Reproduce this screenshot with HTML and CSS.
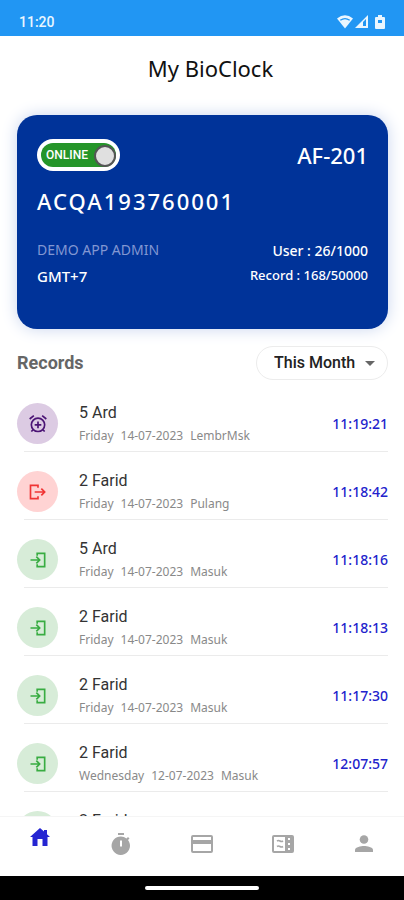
FILE: index.html
```html
<!DOCTYPE html>
<html lang="en">
<head>
<meta charset="utf-8">
<meta name="viewport" content="width=device-width, initial-scale=1">
<title>My BioClock</title>
<link rel="stylesheet" href="styles.css">
</head>
<body>
<svg width="0" height="0" class="sprite" aria-hidden="true">
  <symbol id="login" viewBox="0 0 24 24"><path d="M11 7V4H20V20H11V17M3 12H14M10 8L14 12L10 16" fill="none" stroke="currentColor" stroke-width="2"/></symbol>
  <symbol id="logout" viewBox="0 0 24 24"><path d="M12 7V4H3V20H12V17M8 12H20M16 8L20 12L16 16" fill="none" stroke="currentColor" stroke-width="2"/></symbol>
  <symbol id="alarm" viewBox="0 0 24 24"><g fill="none" stroke="currentColor" stroke-width="2"><circle cx="12" cy="13" r="8"/><path d="M2 6L7 2M22 6L17 2M12 9V17M8 13H16M6 19L4 21M18 19L20 21"/></g></symbol>
</svg>

<header class="status">
  <span>11:20</span>
  <span class="status-icons">
    <svg width="16" height="14" viewBox="0 0 16 14"><path d="M0 3.5Q8-2.800 16 3.500L8 13.500Z" fill="#e9f6ff"/><path d="M3.300 5.300Q8 2 12.700 5.300" fill="none" stroke="#2196f3" stroke-width="1.300"/></svg>
    <svg width="14" height="13" viewBox="0 0 14 13"><path d="M0 13L13 0V13Z" fill="#e9f6ff"/><path d="M8 7L11 4V11H8Z" fill="#2196f3"/></svg>
    <svg class="battery" width="10" height="14" viewBox="0 0 10 14"><path d="M3 0H7V2H9Q10 2 10 3V13Q10 14 9 14H1Q0 14 0 13V3Q0 2 1 2H3Z" fill="#e9f6ff"/><path d="M3 5H7V8H3Z" fill="#2196f3"/></svg>
  </span>
</header>

<main class="screen">
  <h1>My BioClock</h1>

  <section class="card">
    <div class="card-row">
      <label class="toggle"><input type="checkbox" role="switch" checked><span class="track">ONLINE</span></label>
      <span class="model">AF-201</span>
    </div>
    <p class="serial">ACQA193760001</p>
    <div class="card-row details">
      <div class="owner"><span class="muted">DEMO APP ADMIN</span><span>GMT+7</span></div>
      <div class="counts"><span class="users">User : 26/1000</span><span>Record : 168/50000</span></div>
    </div>
  </section>

  <div class="records-head">
    <h2>Records</h2>
    <div class="period">
      <select aria-label="Period"><option>This Month</option></select>
      <svg width="10" height="5" viewBox="0 0 10 5" aria-hidden="true"><path d="M0 0H10L5 5Z" fill="#666"/></svg>
    </div>
  </div>

  <ul class="records">
    <li><span class="badge overtime"><svg width="20" height="20"><use href="#alarm"/></svg></span><div class="who"><span class="name">5 Ard</span><span class="meta"><span>Friday</span><span>14-07-2023</span><span>LembrMsk</span></span></div><time>11:19:21</time></li>
    <li><span class="badge out"><svg width="20" height="20"><use href="#logout"/></svg></span><div class="who"><span class="name">2 Farid</span><span class="meta"><span>Friday</span><span>14-07-2023</span><span>Pulang</span></span></div><time>11:18:42</time></li>
    <li><span class="badge in"><svg width="20" height="20"><use href="#login"/></svg></span><div class="who"><span class="name">5 Ard</span><span class="meta"><span>Friday</span><span>14-07-2023</span><span>Masuk</span></span></div><time>11:18:16</time></li>
    <li><span class="badge in"><svg width="20" height="20"><use href="#login"/></svg></span><div class="who"><span class="name">2 Farid</span><span class="meta"><span>Friday</span><span>14-07-2023</span><span>Masuk</span></span></div><time>11:18:13</time></li>
    <li><span class="badge in"><svg width="20" height="20"><use href="#login"/></svg></span><div class="who"><span class="name">2 Farid</span><span class="meta"><span>Friday</span><span>14-07-2023</span><span>Masuk</span></span></div><time>11:17:30</time></li>
    <li><span class="badge in"><svg width="20" height="20"><use href="#login"/></svg></span><div class="who"><span class="name">2 Farid</span><span class="meta"><span>Wednesday</span><span>12-07-2023</span><span>Masuk</span></span></div><time>12:07:57</time></li>
    <li><span class="badge in"></span><div class="who"><span class="name">2 Farid</span><span class="meta"></span></div></li>
  </ul>
</main>

<nav class="tabs">
  <a href="#home" class="active" aria-label="Home"><svg width="20" height="18" viewBox="0 0 20 18"><path d="M10 0L14 3.600V2H17V6.300L20 9H17.500V18H12.500V11H7.500V18H2.500V9H0Z" fill="currentColor"/></svg></a>
  <a href="#timer" aria-label="Timer"><svg width="20" height="22" viewBox="0 0 20 22"><path d="M7 0H13V2H7Z" fill="currentColor"/><path d="M10 3.500A9 9 0 0 1 15.500 5.500L17 4L18.500 5.500L17 7A9.200 9.200 0 1 1 10 3.500ZM9 7.500V13.500H11V7.500Z" fill="currentColor" fill-rule="evenodd"/></svg></a>
  <a href="#card" aria-label="Card"><svg width="22" height="18" viewBox="0 0 22 18"><path d="M2 0H20Q22 0 22 2V16Q22 18 20 18H2Q0 18 0 16V2Q0 0 2 0ZM2 2V5H20V2ZM2 9V16H20V9Z" fill="currentColor" fill-rule="evenodd"/></svg></a>
  <a href="#ticket" aria-label="Ticket"><svg width="22" height="18" viewBox="0 0 22 18"><path d="M2 0H20Q22 0 22 2V16Q22 18 20 18H2Q0 18 0 16V2Q0 0 2 0ZM2 2V16H13V2ZM16 3V5H18V3ZM16 8V10H18V8ZM16 13V15H18V13Z" fill="currentColor" fill-rule="evenodd"/><path d="M5 6Q6.500 5 8 6T11 6M5 11.500Q6.500 10.500 8 11.500T11 11.500" fill="none" stroke="currentColor" stroke-width="1.700"/></svg></a>
  <a href="#profile" aria-label="Profile"><svg width="18" height="18" viewBox="0 0 18 18"><circle cx="9" cy="4.500" r="4.300" fill="currentColor"/><path d="M0 17V15C0 12 6 11 9 11S18 12 18 15V17Z" fill="currentColor"/></svg></a>
</nav>
<footer class="gesture"><span></span></footer>
</body>
</html>
```
FILE: styles.css
```css
* { box-sizing: border-box; }

body {
  margin: 0;
  height: 100vh;
  display: flex;
  flex-direction: column;
  overflow: hidden;
  background: #fff;
  font-family: "Noto Sans", sans-serif;
}

h1, h2, p, ul { margin: 0; padding: 0; }

.sprite { position: absolute; }

.status {
  display: flex;
  justify-content: space-between;
  align-items: center;
  flex: none;
  height: 36px;
  padding: 7px 19px 0;
  background: #2196f3;
  color: #e9f6ff;
  font: 500 14px/20px Roboto, sans-serif;
}

.status-icons { display: flex; align-items: center; gap: 2px; }
.battery { margin-left: 4px; }

.screen {
  flex: 1;
  min-height: 0;
  display: flex;
  flex-direction: column;
  padding: 16px 16px 0 17px;
  overflow: hidden;
}

h1 {
  padding-left: 16px;
  text-align: center;
  font-size: 22px;
  line-height: 32px;
  font-weight: 400;
  color: #111;
}

.card {
  margin-top: 31px;
  padding: 24px 20px 40px;
  border-radius: 20px;
  background: #003399;
  color: #fff;
  box-shadow: 0 0 16px #c9d5ee;
}

.card-row { display: flex; justify-content: space-between; align-items: center; }

.toggle {
  position: relative;
  display: flex;
  padding: 4px;
  border-radius: 16px;
  background: #fff;
}

.track {
  width: 75px;
  padding-left: 5px;
  border-radius: 12px;
  background: #259529;
  font: 500 12px/24px Roboto, sans-serif;
}

.toggle input {
  appearance: none;
  position: absolute;
  right: 4px;
  top: 6px;
  width: 22px;
  height: 22px;
  margin: 0;
  border: 2px solid #555;
  border-radius: 50%;
  background: #e0e0e0;
}

.model { font-size: 22px; line-height: 32px; font-weight: 500; }

.serial {
  margin-top: 14px;
  font-size: 22px;
  line-height: 32px;
  font-weight: 500;
  letter-spacing: 2px;
}

.details { margin-top: 20px; }
.owner, .counts { display: flex; flex-direction: column; }
.owner { font-size: 15px; line-height: 26px; font-weight: 500; }
.muted { color: #8297d2; font-size: 14px; font-weight: 400; }
.counts { align-items: flex-end; font-size: 13px; line-height: 24px; font-weight: 500; }
.users { font-size: 14px; }

.records-head {
  display: flex;
  justify-content: space-between;
  align-items: center;
  margin-top: 17px;
}

h2 { font: 700 18px/24px Roboto, sans-serif; color: #666; }

.period { position: relative; }

.period select {
  appearance: none;
  height: 34px;
  padding: 0 31px 0 17px;
  border: 1px solid #ececec;
  border-radius: 17px;
  background: #fff;
  color: #222;
  font: 500 16px/20px Roboto, sans-serif;
}

.period svg { position: absolute; right: 13px; top: 15px; pointer-events: none; }

.records { list-style: none; margin-top: 4px; }

.records li {
  display: flex;
  align-items: center;
  height: 68px;
  padding-top: 11px;
  background: linear-gradient(#ebebeb, #ebebeb) 7px 100% / 100% 1px no-repeat;
}

.badge {
  display: grid;
  place-items: center;
  width: 41px;
  height: 41px;
  margin-right: 21px;
  border-radius: 50%;
}

.overtime { background: #dccbe3; color: #4b1475; }
.out { background: #ffd3d3; color: #f03434; }
.in { background: #d7ecd8; color: #39ac42; }

.who { flex: 1; display: flex; flex-direction: column; }
.name { font: 400 16px/24px Roboto, sans-serif; color: #333; }
.meta { display: flex; gap: 7px; height: 22px; font-size: 12px; line-height: 22px; color: #898989; }
time { font-size: 14px; line-height: 20px; font-weight: 500; color: #2222cc; }

.tabs {
  display: flex;
  flex: none;
  height: 60px;
  border-top: 1px solid #f5f5f5;
  background: #fff;
}

.tabs a {
  flex: 1;
  display: flex;
  align-items: center;
  justify-content: center;
  color: #a6a6a6;
  padding-bottom: 5px;
}

.tabs .active { color: #2525d2; padding-bottom: 20px; }

.gesture {
  display: grid;
  place-items: center;
  flex: none;
  height: 24px;
  background: #000;
}

.gesture span { width: 28%; height: 4px; border-radius: 2px; background: #fff; }
```
